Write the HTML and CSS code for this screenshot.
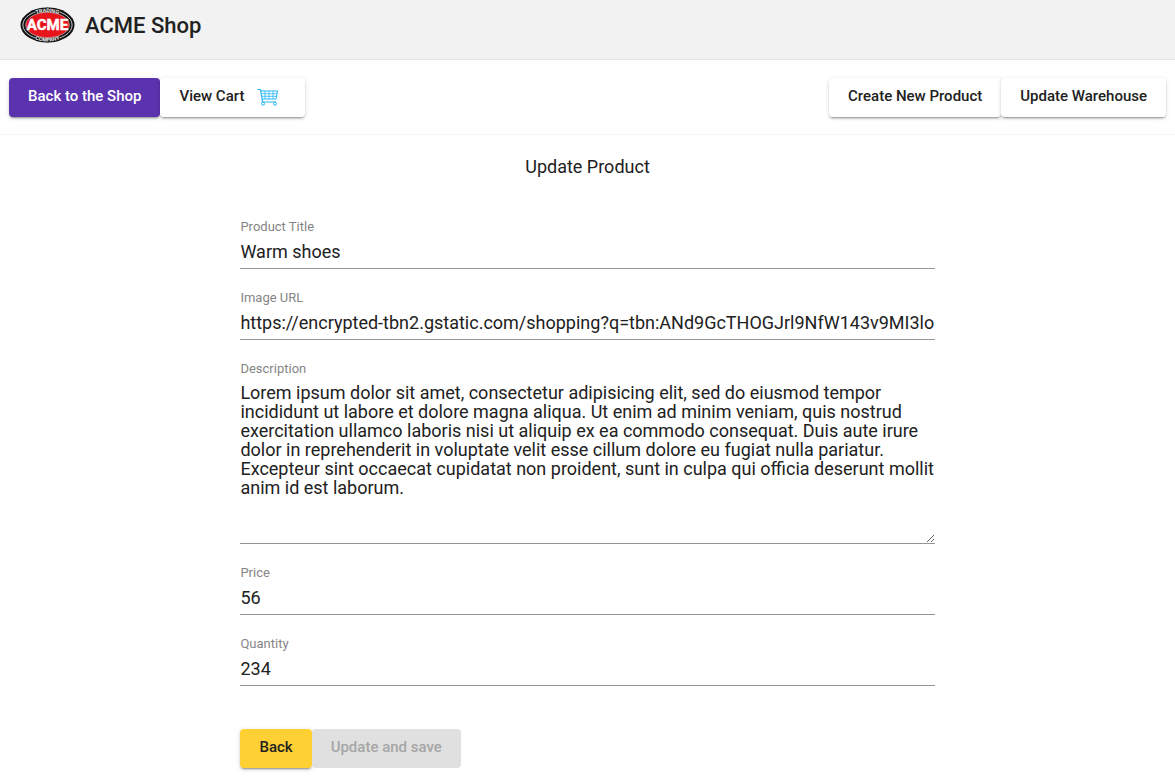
FILE: index.html
```html
<!DOCTYPE html>
<html lang="en">
<head>
<meta charset="utf-8">
<meta name="viewport" content="width=device-width, initial-scale=1">
<title>ACME Shop</title>
<link rel="stylesheet" href="styles.css">
</head>
<body>
<header class="header">
  <svg class="logo" viewBox="0 0 55 36" role="img" aria-label="ACME Trading Company">
    <defs>
      <path id="arc-top" d="M5.5 18A22 13 0 0 1 49.5 18"/>
      <path id="arc-bottom" d="M3.5 18A24 16.5 0 0 0 51.5 18"/>
    </defs>
    <ellipse cx="27.5" cy="18" rx="27" ry="17.5" fill="#111"/>
    <ellipse cx="27.5" cy="18" rx="24.6" ry="15" fill="none" stroke="#ddd" stroke-width=".9"/>
    <path d="M15.5 2.6Q27.5 -1 39.5 2.6V6H15.5ZM15.5 33.4Q27.5 37 39.5 33.4V30H15.5Z" fill="#111"/>
    <ellipse cx="27.5" cy="18" rx="21.8" ry="12.7" fill="#e8141c" stroke="#ddd" stroke-width=".6"/>
    <g class="logo-small" text-anchor="middle">
      <text><textPath href="#arc-top" startOffset="50%">TRADING</textPath></text>
      <text><textPath href="#arc-bottom" startOffset="50%">COMPANY</textPath></text>
    </g>
    <text class="logo-name" x="27.5" y="23" text-anchor="middle">ACME</text>
  </svg>
  <h1 class="brand">ACME Shop</h1>
</header>
<nav class="toolbar">
  <div class="group">
    <button class="btn btn-primary" type="button">Back to the Shop</button>
    <button class="btn btn-cart" type="button">View Cart
      <svg class="cart" viewBox="0 0 22 18" fill="none" stroke="#29b6f6" aria-hidden="true">
        <path d="M.5 1.5H3.5L5.5 14H19" stroke-width="1.2"/>
        <path d="M4 3H20.5L19 11H5" stroke-width="1.1"/>
        <path d="M4.3 5.7H20M4.7 8.3H19.5M8 3V11M12 3V11M16 3V11" stroke-width=".8"/>
        <circle cx="6" cy="15.7" r="1.5"/><circle cx="18" cy="15.7" r="1.5"/>
      </svg>
    </button>
  </div>
  <div class="group">
    <button class="btn" type="button">Create New Product</button>
    <button class="btn" type="button">Update Warehouse</button>
  </div>
</nav>
<main class="page">
  <h2 class="title">Update Product</h2>
  <form class="form">
    <div class="field">
      <label for="title">Product Title</label>
      <input id="title" type="text" value="Warm shoes">
    </div>
    <div class="field">
      <label for="image">Image URL</label>
      <input id="image" type="text" value="https://encrypted-tbn2.gstatic.com/shopping?q=tbn:ANd9GcTHOGJrl9NfW143v9MI3loUW">
    </div>
    <div class="field">
      <label for="description">Description</label>
      <textarea id="description" rows="8">Lorem ipsum dolor sit amet, consectetur adipisicing elit, sed do eiusmod tempor incididunt ut labore et dolore magna aliqua. Ut enim ad minim veniam, quis nostrud exercitation ullamco laboris nisi ut aliquip ex ea commodo consequat. Duis aute irure dolor in reprehenderit in voluptate velit esse cillum dolore eu fugiat nulla pariatur. Excepteur sint occaecat cupidatat non proident, sunt in culpa qui officia deserunt mollit anim id est laborum.</textarea>
    </div>
    <div class="field">
      <label for="price">Price</label>
      <input id="price" type="text" inputmode="decimal" value="56">
    </div>
    <div class="field">
      <label for="quantity">Quantity</label>
      <input id="quantity" type="text" inputmode="numeric" value="234">
    </div>
    <div class="group actions">
      <button class="btn btn-accent" type="button">Back</button>
      <button class="btn" type="submit" disabled>Update and save</button>
    </div>
  </form>
</main>
</body>
</html>
```
FILE: styles.css
```css
* { box-sizing: border-box; }

body {
  margin: 0;
  background: #fff;
  color: #212121;
  font-family: Roboto, "Liberation Sans", sans-serif;
  font-size: 18px;
}

.header {
  display: flex;
  align-items: flex-start;
  gap: 10px;
  padding: 7px 20px 15px;
  background: #f2f2f2;
  border-bottom: 1px solid #e6e6e6;
}

.logo { width: 55px; height: 36px; }
.logo-small { fill: #fff; font: bold 5px "Liberation Sans", sans-serif; }
.logo-name { fill: #fff; stroke: #fff; stroke-width: .5px; font: 700 15px Roboto, sans-serif; }

.brand { margin: 0; font-size: 22px; font-weight: 500; line-height: 37px; }

.toolbar {
  display: flex;
  justify-content: space-between;
  padding: 18px 9px 17px;
  border-bottom: 1px solid #f5f5f5;
}

.group { display: flex; }

.btn {
  display: flex;
  align-items: center;
  height: 39px;
  padding: 0 19px 2px;
  border: 0;
  border-radius: 4px;
  background: #fff;
  color: #212121;
  font: 500 15px/37px Roboto, "Liberation Sans", sans-serif;
  box-shadow: 0 3px 1px -2px rgba(0, 0, 0, .2), 0 2px 2px rgba(0, 0, 0, .14), 0 1px 5px rgba(0, 0, 0, .12);
}

.btn-primary { background: #5b33ae; color: #fff; }
.btn-accent { background: #ffd033; }
.btn:disabled { background: #e0e0e0; color: #a6a6a6; box-shadow: none; }
.btn-cart { gap: 13px; padding-right: 26px; }
.cart { width: 22px; height: 18px; }

.page { padding: 0 9px 9px; }

.title {
  margin: 19px 0 39px;
  font-size: 18px;
  font-weight: 400;
  line-height: 26px;
  text-align: center;
}

.form { width: 60%; margin: 0 auto; }

.field { display: flex; flex-direction: column; margin-bottom: 21px; }

.field label { color: #858585; font-size: 13px; line-height: 16px; }

.field input,
.field textarea {
  width: 100%;
  padding: 6px 0;
  border: 0;
  border-bottom: 1px solid #949494;
  border-radius: 0;
  outline: 0;
  background: transparent;
  color: #212121;
  font: 400 18px/19px Roboto, "Liberation Sans", sans-serif;
}

.field input { height: 34px; }
.field textarea { display: block; height: 167px; resize: vertical; }

.actions { padding-top: 22px; }
```
